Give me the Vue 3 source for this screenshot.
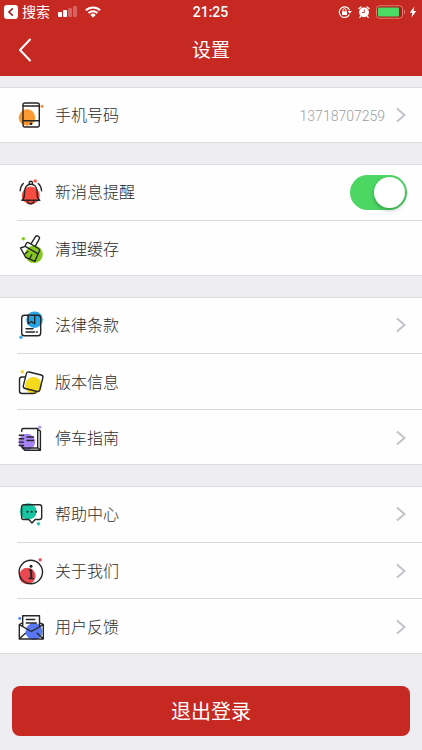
<script setup>
import { ref } from 'vue'

const notify = ref(true)

const groups = [
  [{ id: 'phone', label: '手机号码', value: '13718707259', arrow: true }],
  [
    { id: 'bell', label: '新消息提醒', toggle: true },
    { id: 'brush', label: '清理缓存' },
  ],
  [
    { id: 'law', label: '法律条款', arrow: true },
    { id: 'version', label: '版本信息' },
    { id: 'parking', label: '停车指南', arrow: true },
  ],
  [
    { id: 'help', label: '帮助中心', arrow: true },
    { id: 'about', label: '关于我们', arrow: true },
    { id: 'feedback', label: '用户反馈', arrow: true },
  ],
]
</script>

<template>
  <div class="page">
    <header class="header">
      <div class="status">
        <div class="side">
          <svg class="badge" viewBox="0 0 14 14" aria-hidden="true">
            <rect width="14" height="14" rx="3" fill="#fff" />
            <path d="M8.8 3.4 5 7l3.8 3.6" fill="none" stroke="#a3211d" stroke-width="1.6" />
          </svg>
          <span class="from">搜索</span>
          <svg class="signal" viewBox="0 0 20 14" aria-hidden="true">
            <g fill="#fff">
              <rect y="7" width="4" height="5" rx="1" />
              <rect x="5" y="5" width="4" height="7" rx="1" />
              <rect x="10" y="3" width="4" height="9" rx="1" opacity=".28" />
              <rect x="15" y="1" width="4" height="11" rx="1" opacity=".28" />
            </g>
          </svg>
          <svg class="wifi" viewBox="0 0 16 12" aria-hidden="true">
            <g fill="none" stroke="#fff" stroke-width="2">
              <path d="M.9 4.3a10.2 10.2 0 0 1 14.2 0" />
              <path d="M3.5 7a6.5 6.5 0 0 1 9 0" />
            </g>
            <path d="M5.3 8.9a3.9 3.9 0 0 1 5.4 0L8 11.6z" fill="#fff" />
          </svg>
        </div>
        <time class="time">21:25</time>
        <div class="side right">
          <svg class="lock" viewBox="0 0 14 14" aria-hidden="true">
            <path d="M11.3 9.6A5.3 5.3 0 1 1 11.6 5.4" fill="none" stroke="#fff" stroke-width="1.2" />
            <path d="M9.8 6h4l-2 2.7z" fill="#fff" />
            <rect x="4" y="6.3" width="5" height="3.8" rx=".6" fill="#fff" />
            <path d="M5 6.6V5.2a1.5 1.5 0 0 1 3 0v1.4" fill="none" stroke="#fff" />
          </svg>
          <svg class="alarm" viewBox="0 0 12 14" aria-hidden="true">
            <circle cx="6" cy="7.3" r="4.9" fill="#fff" />
            <path d="M1 3.6 3 1.9M11 3.6 9 1.9M2.8 11.2l-1 1.2M9.2 11.2l1 1.2" stroke="#fff" stroke-width="1.3" stroke-linecap="round" />
            <path d="M6.3 4.5v3.1H4" fill="none" stroke="#c62822" stroke-width=".9" />
          </svg>
          <svg class="battery" viewBox="0 0 30 14" aria-hidden="true">
            <rect x=".5" y=".8" width="26" height="12.4" rx="3" fill="#a51d19" stroke="#e87e74" />
            <rect x="2" y="2.5" width="21" height="9" rx="1" fill="#4cd964" />
            <path d="M28 5v4.4c1.4-.5 1.4-3.9 0-4.4" fill="#e87e74" />
          </svg>
          <svg class="bolt" viewBox="0 0 8 12" aria-hidden="true">
            <path d="M5.3.5.8 6.7h2.5L2.5 11.5 7.2 5H4.5z" fill="#fff" />
          </svg>
        </div>
      </div>
      <div class="nav">
        <button class="back" type="button" aria-label="返回">
          <svg viewBox="0 0 14 24" aria-hidden="true">
            <path d="M12 1.5 2 12l10 10.5" fill="none" stroke="#fff" stroke-width="2" stroke-linecap="round" stroke-linejoin="round" />
          </svg>
        </button>
        <h1 class="title">设置</h1>
      </div>
    </header>

    <main class="content">
      <ul v-for="(group, i) in groups" :key="i" class="group">
        <li v-for="row in group" :key="row.id" class="item">
          <component
            :is="row.toggle ? 'label' : 'a'"
            class="row"
            :href="row.toggle ? undefined : '#' + row.id"
            :for="row.toggle ? 'notify' : undefined"
          >
            <svg class="icon" viewBox="1 0 30 30" aria-hidden="true">
              <template v-if="row.id === 'phone'">
                <circle cx="11" cy="17.5" r="8.3" fill="#fb9a32" />
                <circle cx="26" cy="6.3" r="1.5" fill="#f28a3c" />
                <g class="ink">
                  <rect x="7" y="3" width="16.3" height="24" rx="2" />
                  <path d="M7 6h16.3M7 20.7h16.3" />
                </g>
                <circle cx="15" cy="23.8" r="1.4" fill="#222" />
              </template>
              <template v-else-if="row.id === 'bell'">
                <circle cx="14.8" cy="18.5" r="9" fill="#fb4b40" />
                <circle cx="19.2" cy="4" r="1.8" fill="#fb5a50" />
                <g class="ink">
                  <path d="M5.8 23.3c2.8-2 2.7-4.2 2.7-8.3 0-5 2.8-7.800 6.300-7.800s6.300 2.800 6.300 7.800c0 4.100 0 6.300 2.700 8.300z" />
                  <path d="M13.200 7V5.800a1.600 1.600 0 0 1 3.200 0V7M11.500 23.500a3.300 3.300 0 0 0 6.600 0M7.300 6.500Q4.400 9 4.200 13.800M22.300 6.500q2.900 2.500 3.300 7.300" />
                </g>
              </template>
              <template v-else-if="row.id === 'brush'">
                <circle cx="18" cy="20.3" r="8.8" fill="#86c91e" />
                <circle cx="7.3" cy="4.7" r="1.8" fill="#8acb2a" />
                <g class="ink">
                  <path d="m15.3 9.3 4.2-6.600c1.500-2 4.900 0 3.700 2.300l-3.600 6.600" />
                  <path d="m12.500 8.700 10 5.800c1.200.8 1.500 1.500.9 2.700l-1.400 2.600L9 12.200l1.300-2.700c.5-1 1.200-1.300 2.200-.8z" />
                  <path d="M9.300 12.400 4.500 14l5.200 9.300 9.300 4 3-7.600M8.200 20.500l3.600-3M13.500 25l2.200-4.300" />
                </g>
              </template>
              <template v-else-if="row.id === 'law'">
                <circle cx="18.5" cy="9.7" r="8.3" fill="#26a6e8" />
                <circle cx="5" cy="27.3" r="1.7" fill="#30abed" />
                <g class="ink">
                  <rect x="5.7" y="5.3" width="19" height="20.4" rx="2.8" />
                  <path d="M12.200 5.300v8.500l3.200-2.300 3.300 2.300V5.300M10 18.700h7M10 22h8.500M20.500 22h.8" />
                </g>
              </template>
              <template v-else-if="row.id === 'version'">
                <circle cx="17.5" cy="18.5" r="8.4" fill="#f4d91d" />
                <circle cx="6.3" cy="4.8" r="1.8" fill="#f6d438" />
                <g class="ink">
                  <path d="M9.500 10H6a2.500 2.500 0 0 0-2.500 2.500V24A2.500 2.500 0 0 0 6 26.500h11.500c1.700 0 2.500-.6 2.800-1.800" />
                  <rect x="8.600" y="6.200" width="17" height="17" rx="2.300" transform="rotate(14 17.100 14.700)" />
                </g>
              </template>
              <template v-else-if="row.id === 'parking'">
                <circle cx="10.8" cy="19" r="8.3" fill="#a783f5" />
                <circle cx="23.7" cy="4.2" r="1.7" fill="#b89af8" />
                <g class="ink">
                  <path d="M5.700 8.500V7.300c0-1.200.6-1.800 1.800-1.800h14.200V25H8.300c-1.500 0-2.300-.8-2.500-1.800M22 6.700l2.400 1.500v19H8.800L6.300 24.700M22 25l2.400 2.200M3.200 12.300h4.300M3.200 15.700h4.300M3.200 19.100h4.300M3.200 22.500h4.300M11 14h6.500M11 17.500h6.500" />
                </g>
              </template>
              <template v-else-if="row.id === 'help'">
                <circle cx="12.3" cy="12.5" r="8.3" fill="#16c6a3" />
                <circle cx="22.5" cy="24.8" r="1.7" fill="#26c9aa" />
                <g class="ink">
                  <path d="M7.800 5.700h15.700a2.200 2.200 0 0 1 2.200 2.200v10.400a2.200 2.200 0 0 1-2.200 2.200h-4.300L16 24l-3.300-3.500H7.800a2.200 2.200 0 0 1-2.200-2.200V7.900a2.200 2.200 0 0 1 2.200-2.200z" />
                </g>
                <g fill="#222">
                  <circle cx="11.5" cy="12.8" r="1.1" />
                  <circle cx="15.7" cy="12.8" r="1.1" />
                  <circle cx="19.9" cy="12.8" r="1.1" />
                </g>
              </template>
              <template v-else-if="row.id === 'about'">
                <circle cx="11.3" cy="20" r="8.3" fill="#ea4750" />
                <circle cx="24.2" cy="3.8" r="1.7" fill="#ef5360" />
                <g class="ink">
                  <circle cx="14.8" cy="16" r="11.7" />
                  <path d="M13.300 14h1.700M13 22.500h4.200" />
                  <path d="M15.200 14.500v7.500" stroke-width="2.200" />
                </g>
                <circle cx="15" cy="10.2" r="1.5" fill="#222" />
              </template>
              <template v-else>
                <circle cx="18" cy="19.5" r="8.4" fill="#5877f5" />
                <circle cx="3.8" cy="6.3" r="1.6" fill="#5c8af6" />
                <g class="ink">
                  <path d="M6.500 10.800 3.300 12.500V27h24V12.500l-3.600-1.700M3.300 12.700l12 6.800 12-6.800M6.700 14V3.700h16.800V14M10.300 7.500h8.500M10.300 11h10M3.700 26.600l5.800-5.300M26.900 26.600l-5.800-5.300" />
                </g>
              </template>
            </svg>
            <span class="label">{{ row.label }}</span>
            <span v-if="row.value" class="value">{{ row.value }}</span>
            <input v-if="row.toggle" id="notify" v-model="notify" class="switch" type="checkbox" />
            <svg v-if="row.arrow" class="arrow" viewBox="0 0 10 16" aria-hidden="true">
              <path d="m1 1.500 7.500 6.500L1 14.500" fill="none" stroke="#c3c3c8" stroke-width="2" />
            </svg>
          </component>
        </li>
      </ul>
      <button class="logout" type="button">退出登录</button>
    </main>
  </div>
</template>

<style>
body {
  margin: 0;
  background: #eeedf2;
}
</style>

<style scoped>
.page {
  min-height: 100vh;
  background: #eeedf2;
  color: #2c2c2c;
  font-family: Roboto, "Noto Sans CJK SC", sans-serif;
  font-weight: 300;
}
.header {
  background: #c62822;
  color: #fff;
}
.status {
  display: grid;
  grid-template-columns: 1fr auto 1fr;
  align-items: center;
  height: 24px;
  padding: 0 5px 0 4px;
}
.side {
  display: flex;
  align-items: center;
}
.right {
  justify-content: flex-end;
}
.badge {
  width: 14px;
  height: 14px;
}
.from {
  margin: 0 8px 0 4px;
  font-size: 14px;
  line-height: 20px;
  font-weight: 400;
}
.signal {
  width: 20px;
  height: 14px;
  margin-right: 7px;
}
.wifi {
  width: 16px;
  height: 12px;
}
.time {
  font-size: 14px;
  line-height: 24px;
  font-weight: 500;
}
.lock {
  width: 14px;
  height: 14px;
  margin-right: 6px;
}
.alarm {
  width: 12px;
  height: 14px;
  margin-right: 6px;
}
.battery {
  width: 30px;
  height: 14px;
  margin-right: 3px;
}
.bolt {
  width: 8px;
  height: 12px;
}
.nav {
  display: grid;
  grid-template-columns: 44px 1fr 44px;
  align-items: center;
  height: 52px;
}
.back {
  display: flex;
  padding: 8px 0 8px 18px;
  border: 0;
  background: none;
}
.back svg {
  width: 14px;
  height: 24px;
}
.title {
  margin: 0;
  padding-top: 2px;
  font-size: 19px;
  line-height: 28px;
  font-weight: 400;
  text-align: center;
}
.content {
  display: flex;
  flex-direction: column;
  gap: 21px;
  padding: 11px 0 14px;
}
.group {
  margin: 0;
  padding: 0;
  list-style: none;
  background: #fefefe;
  box-shadow: inset 0 1px #dcdbe0, inset 0 -1px #dcdbe0;
}
.item {
  box-sizing: border-box;
  height: 56px;
  margin-left: 17px;
}
.item + .item {
  border-top: 1px solid #d9d9dc;
}
.row {
  display: flex;
  align-items: center;
  height: 100%;
  padding-right: 16px;
  color: inherit;
  text-decoration: none;
}
.icon {
  width: 30px;
  height: 30px;
  margin-right: 8px;
}
.icon .ink {
  fill: none;
  stroke: #262626;
  stroke-width: 1.4;
  stroke-linecap: round;
  stroke-linejoin: round;
}
.label {
  flex: 1;
  padding-top: 2px;
  font-size: 16px;
  line-height: 24px;
}
.value {
  padding-top: 2px;
  color: #a0a0a2;
  font-size: 14px;
  line-height: 24px;
}
.arrow {
  width: 10px;
  height: 16px;
  margin-left: 11px;
}
.switch {
  appearance: none;
  width: 57px;
  height: 35px;
  margin: 0 -1px 0 0;
  padding: 2px;
  box-sizing: border-box;
  border-radius: 18px;
  background: #d8d8dc;
}
.switch::before {
  content: "";
  display: block;
  width: 31px;
  height: 31px;
  border-radius: 50%;
  background: #fff;
  box-shadow: 0 2px 4px rgba(0, 0, 0, 0.28);
}
.switch:checked {
  background: #4cd763;
}
.switch:checked::before {
  margin-left: auto;
}
.logout {
  height: 50px;
  margin: 11px 12px 0;
  padding: 2px 0 0;
  border: 0;
  border-radius: 8px;
  background: #c62822;
  color: #fff;
  font-family: inherit;
  font-size: 20px;
  line-height: 30px;
}
</style>
